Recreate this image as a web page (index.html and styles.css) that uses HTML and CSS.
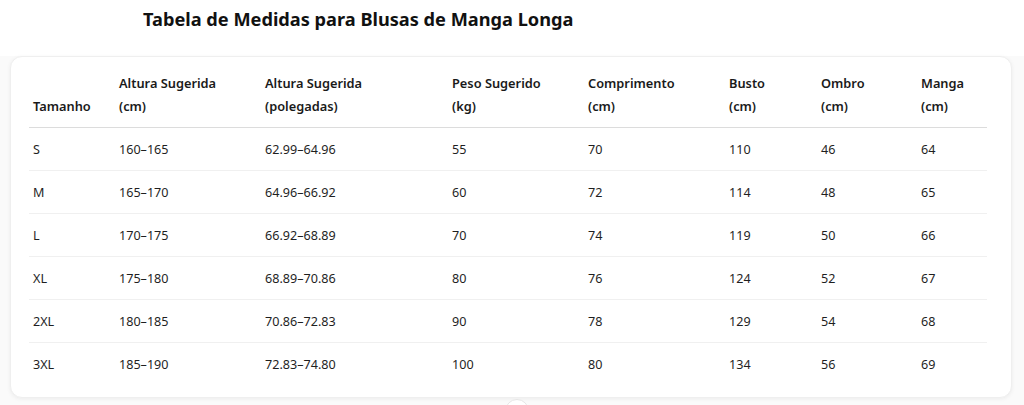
FILE: index.html
```html
<!DOCTYPE html>
<html lang="pt">
<head>
<meta charset="utf-8">
<title>Tabela de Medidas</title>
<link rel="stylesheet" href="styles.css">
</head>
<body>
<h1 class="title">Tabela de Medidas para Blusas de Manga Longa</h1>
<div class="card">
  <table class="sizes">
    <colgroup>
      <col class="c1"><col class="c2"><col class="c3"><col class="c4"><col class="c5"><col class="c6"><col class="c7"><col class="c8">
    </colgroup>
    <thead>
      <tr>
        <th>Tamanho</th>
        <th>Altura Sugerida<br>(cm)</th>
        <th>Altura Sugerida<br>(polegadas)</th>
        <th>Peso Sugerido<br>(kg)</th>
        <th>Comprimento<br>(cm)</th>
        <th>Busto<br>(cm)</th>
        <th>Ombro<br>(cm)</th>
        <th>Manga<br>(cm)</th>
      </tr>
    </thead>
    <tbody>
      <tr><td>S</td><td>160–165</td><td>62.99–64.96</td><td>55</td><td>70</td><td>110</td><td>46</td><td>64</td></tr>
      <tr><td>M</td><td>165–170</td><td>64.96–66.92</td><td>60</td><td>72</td><td>114</td><td>48</td><td>65</td></tr>
      <tr><td>L</td><td>170–175</td><td>66.92–68.89</td><td>70</td><td>74</td><td>119</td><td>50</td><td>66</td></tr>
      <tr><td>XL</td><td>175–180</td><td>68.89–70.86</td><td>80</td><td>76</td><td>124</td><td>52</td><td>67</td></tr>
      <tr><td>2XL</td><td>180–185</td><td>70.86–72.83</td><td>90</td><td>78</td><td>129</td><td>54</td><td>68</td></tr>
      <tr><td>3XL</td><td>185–190</td><td>72.83–74.80</td><td>100</td><td>80</td><td>134</td><td>56</td><td>69</td></tr>
    </tbody>
  </table>
</div>
<div class="scroll-dot"></div>
</body>
</html>
```
FILE: styles.css
```css
html, body {
  margin: 0;
  padding: 0;
}
body {
  background: #fafafa;
  font-family: "Noto Sans", "Open Sans", Arial, sans-serif;
  color: #1f1f1f;
  height: 405px;
  overflow: hidden;
  position: relative;
}
.title {
  margin: 0;
  padding: 6px 0 0 143px;
  height: 56px;
  box-sizing: border-box;
  font-size: 18.2px;
  font-weight: 700;
  color: #111;
  line-height: 26px;
  background: #fff;
}
.card {
  margin: 0 12px 0 10px;
  padding: 5px 24px 12px 18px;
  background: #fff;
  border: 1px solid #efefef;
  border-radius: 12px;
  box-shadow: 0 1px 4px rgba(0,0,0,0.06);
}
.sizes {
  width: 100%;
  border-collapse: collapse;
  table-layout: fixed;
  font-size: 13px;
}
.c1 { width: 86px; }
.c2 { width: 146px; }
.c3 { width: 187px; }
.c4 { width: 136px; }
.c5 { width: 141px; }
.c6 { width: 92px; }
.c7 { width: 100px; }
.c8 { width: auto; }
.sizes th {
  text-align: left;
  font-weight: 600;
  font-size: 12.8px;
  line-height: 23px;
  padding: 10px 4px 9px 4px;
  vertical-align: bottom;
  border-bottom: 1px solid #dcdcdc;
  color: #1a1a1a;
}
.sizes td {
  font-size: 12.6px;
  line-height: 23px;
  padding: 10px 4px 9px 4px;
  border-bottom: 1px solid #f0f0f0;
}
.sizes tbody tr:last-child td {
  border-bottom: none;
}
.scroll-dot {
  position: absolute;
  left: 505px;
  top: 399px;
  width: 24px;
  height: 24px;
  border-radius: 50%;
  background: #fff;
  border: 1px solid #e6e6e6;
  box-sizing: border-box;
}
```
